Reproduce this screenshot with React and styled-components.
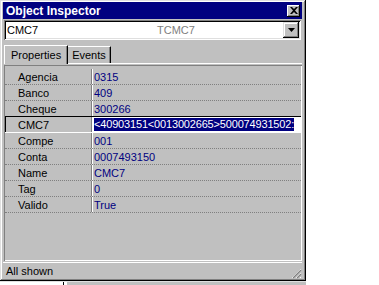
import React from "react";
import styled, { createGlobalStyle } from "styled-components";

const GlobalStyle = createGlobalStyle`
  html, body {
    margin: 0;
    padding: 0;
    background: #ffffff;
  }
  body {
    font-family: "Liberation Sans", Arial, sans-serif;
    font-size: 11px;
  }
`;

const props = [
  { name: "Agencia", value: "0315" },
  { name: "Banco", value: "409" },
  { name: "Cheque", value: "300266" },
  { name: "CMC7", value: "<40903151<0013002665>500074931502:", selected: true },
  { name: "Compe", value: "001" },
  { name: "Conta", value: "0007493150" },
  { name: "Name", value: "CMC7" },
  { name: "Tag", value: "0" },
  { name: "Valido", value: "True" },
];

const App = () => {
  return (
    <>
      <GlobalStyle />
      <Window>
        <TitleBar>
          <span>Object Inspector</span>
          <CloseButton>
            <svg width="8" height="7" viewBox="0 0 8 7">
              <path d="M0 0h2l2 2 2-2h2L5 3.5 8 7H6L4 5 2 7H0l3-3.5z" fill="#000" />
            </svg>
          </CloseButton>
        </TitleBar>
        <Combo>
          <ComboName>CMC7</ComboName>
          <ComboType>TCMC7</ComboType>
          <DropButton>
            <svg width="7" height="4" viewBox="0 0 7 4">
              <path d="M0 0h7L3.5 4z" fill="#000" />
            </svg>
          </DropButton>
        </Combo>
        <TabRow>
          <Tab active>Properties</Tab>
          <Tab>Events</Tab>
        </TabRow>
        <TabBody>
          <Grid>
            {props.map((p) => (
              <Row key={p.name} selected={p.selected}>
                <Gutter selected={p.selected} />
                <NameCell selected={p.selected}>{p.name}</NameCell>
                <ValueCell selected={p.selected}>
                  {p.selected ? <Highlight>{p.value}</Highlight> : p.value}
                </ValueCell>
              </Row>
            ))}
          </Grid>
        </TabBody>
        <StatusBar>
          <span>All shown</span>
          <Grip>
            <svg width="11" height="11" viewBox="0 0 11 11">
              <path d="M10 1L1 10M10 5L5 10M10 9L9 10" stroke="#fff" strokeWidth="1" />
              <path d="M10 2L2 10M10 6L6 10" stroke="#808080" strokeWidth="1.2" />
            </svg>
          </Grip>
        </StatusBar>
      </Window>
      <BottomStrip>
        <BottomBox />
        <BottomBar />
      </BottomStrip>
    </>
  );
};

export default App;

// styled-components
const Window = styled.div`
  width: 306px;
  height: 281px;
  box-sizing: border-box;
  background: #c0c0c0;
  padding: 2px 4px 2px 3px;
  display: flex;
  flex-direction: column;
  box-shadow: inset -1px -1px #000, inset 1px 1px #dfdfdf,
    inset -2px -2px #808080, inset 2px 2px #fff;
`;

const TitleBar = styled.div`
  height: 17px;
  background: #000080;
  color: #fff;
  font-weight: bold;
  font-size: 12px;
  display: flex;
  align-items: center;
  justify-content: space-between;
  padding: 0 2px 0 3px;
  flex-shrink: 0;
`;

const CloseButton = styled.div`
  width: 13px;
  height: 12px;
  background: #c0c0c0;
  display: flex;
  align-items: center;
  justify-content: center;
  box-shadow: inset -1px -1px #000, inset 1px 1px #fff, inset -2px -2px #808080;
`;

const Combo = styled.div`
  margin: 1px 1px 0 1px;
  height: 20px;
  box-sizing: border-box;
  background: #fff;
  display: flex;
  align-items: center;
  padding: 2px 2px 2px 3px;
  box-shadow: inset 1px 1px #808080, inset -1px -1px #fff,
    inset 2px 2px #000, inset -2px -2px #dfdfdf;
  flex-shrink: 0;
`;

const ComboName = styled.span`
  width: 150px;
  color: #000;
`;

const ComboType = styled.span`
  flex: 1;
  color: #808080;
`;

const DropButton = styled.div`
  width: 16px;
  height: 16px;
  background: #c0c0c0;
  display: flex;
  align-items: center;
  justify-content: center;
  box-shadow: inset -1px -1px #000, inset 1px 1px #dfdfdf,
    inset -2px -2px #808080, inset 2px 2px #fff;
`;

const TabRow = styled.div`
  margin-top: 4px;
  height: 19px;
  display: flex;
  align-items: flex-end;
  padding-left: 1px;
  flex-shrink: 0;
`;

const Tab = styled.div`
  height: ${(p) => (p.active ? "19px" : "17px")};
  box-sizing: border-box;
  padding: 0 ${(p) => (p.active ? "6px" : "4px")};
  display: flex;
  align-items: center;
  color: #000;
  background: #c0c0c0;
  border-top: 1px solid #fff;
  border-left: 1px solid #fff;
  border-right: 1px solid #000;
  box-shadow: inset -1px 0 #808080;
  margin-right: ${(p) => (p.active ? "-1px" : "0")};
  position: relative;
  z-index: ${(p) => (p.active ? 1 : 0)};
  margin-bottom: ${(p) => (p.active ? "-1px" : "0")};
`;

const TabBody = styled.div`
  flex: 1;
  margin: 0 0 0 1px;
  border-top: 1px solid #fff;
  display: flex;
  flex-direction: column;
  padding-top: 1px;
`;

const Grid = styled.div`
  flex: 1;
  padding-top: 4px;
  box-shadow: inset 1px 1px #808080, inset -1px -1px #fff;
  padding-left: 1px;
  padding-right: 1px;
`;

const Row = styled.div`
  display: flex;
  height: 16px;
  box-sizing: border-box;
  border-bottom: 1px dotted #808080;
  ${(p) =>
    p.selected &&
    "border-bottom: 1px solid #fff; margin-top: -1px; border-top: 1px solid #000; height: 17px;"}
`;

const Gutter = styled.div`
  width: 13px;
  flex-shrink: 0;
  box-sizing: border-box;
  border-left: ${(p) => (p.selected ? "1px solid #000" : "none")};
`;

const NameCell = styled.div`
  width: 73px;
  flex-shrink: 0;
  display: flex;
  align-items: center;
  color: #000;
  border-right: 1px solid #808080;
  box-shadow: 1px 0 #fff;
`;

const ValueCell = styled.div`
  flex: 1;
  display: flex;
  align-items: center;
  padding-left: 2px;
  color: #000080;
  white-space: nowrap;
  overflow: hidden;
  background: ${(p) => (p.selected ? "#fff" : "transparent")};
`;

const Highlight = styled.span`
  background: #000080;
  color: #fff;
  line-height: 13px;
  letter-spacing: -0.17px;
`;

const StatusBar = styled.div`
  height: 16px;
  margin-top: 1px;
  display: flex;
  align-items: center;
  justify-content: space-between;
  padding-left: 3px;
  color: #000;
  border-top: 1px solid #fff;
  flex-shrink: 0;
`;

const Grip = styled.div`
  display: flex;
  align-items: flex-end;
  align-self: flex-end;
`;

const BottomStrip = styled.div`
  display: flex;
  width: 306px;
  height: 4px;
  border-top: 1px solid #dfdfdf;
`;

const BottomBox = styled.div`
  width: 63px;
  background: #fff;
  border-right: 1px solid #000;
`;

const BottomBar = styled.div`
  flex: 1;
  margin-left: 2px;
  background: #c0c0c0;
  border-left: 1px solid #fff;
`;
